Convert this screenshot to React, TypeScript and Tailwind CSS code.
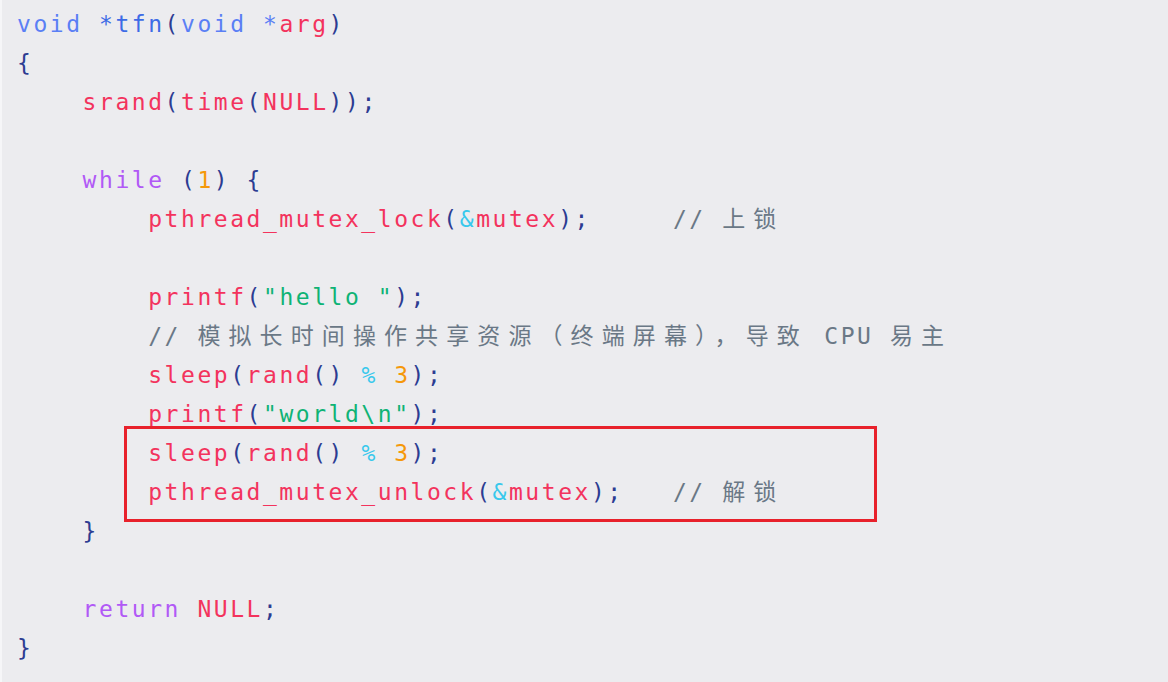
type Tok = [string, string];

const P = "text-[#2c3c92]";
const T = "text-[#5a7ff5]";
const F = "text-[#3d6be6]";
const R = "text-[#f3335d]";
const K = "text-[#b159f6]";
const N = "text-[#f5980a]";
const O = "text-[#38c8ec]";
const S = "text-[#0fb375]";
const C = "text-[#6a7886]";
const CJK = "text-[#6a7886] tracking-[8.1px]";

const lines: Tok[][] = [
  [[T, "void "], [F, "*tfn"], [P, "("], [T, "void *"], [R, "arg"], [P, ")"]],
  [[P, "{"]],
  [[P, "    "], [R, "srand"], [P, "("], [R, "time"], [P, "("], [R, "NULL"], [P, "));"]],
  [],
  [[P, "    "], [K, "while "], [P, "("], [N, "1"], [P, ") {"]],
  [[P, "        "], [R, "pthread_mutex_lock"], [P, "("], [O, "&"], [R, "mutex"], [P, ");     "], [C, "// "], [CJK, "上锁"]],
  [],
  [[P, "        "], [R, "printf"], [P, "("], [S, "\"hello \""], [P, ");"]],
  [[P, "        "], [C, "// "], [CJK, "模拟长时间操作共享资源（终端屏幕），导致"], [C, " CPU "], [CJK, "易主"]],
  [[P, "        "], [R, "sleep"], [P, "("], [R, "rand"], [P, "() "], [O, "% "], [N, "3"], [P, ");"]],
  [[P, "        "], [R, "printf"], [P, "("], [S, "\"world\\n\""], [P, ");"]],
  [[P, "        "], [R, "sleep"], [P, "("], [R, "rand"], [P, "() "], [O, "% "], [N, "3"], [P, ");"]],
  [[P, "        "], [R, "pthread_mutex_unlock"], [P, "("], [O, "&"], [R, "mutex"], [P, ");   "], [C, "// "], [CJK, "解锁"]],
  [[P, "    }"]],
  [],
  [[P, "    "], [K, "return "], [R, "NULL"], [P, ";"]],
  [[P, "}"]],
];

export default function App() {
  return (
    <div className="relative w-[1168px] h-[682px] overflow-hidden bg-[#ececef] border-l-2 border-[#f6f6f8]">
      <pre
        className="pt-[5px] pl-[15px] text-[23px] leading-[39px] tracking-[2.55px] whitespace-pre"
        style={{ fontFamily: '"DejaVu Sans Mono", "Noto Sans CJK SC", monospace' }}
      >
        {lines.map((line, i) => (
          <div key={i} className="h-[39px]">
            {line.map(([cls, text], j) => (
              <span key={j} className={cls}>
                {text}
              </span>
            ))}
          </div>
        ))}
      </pre>
      <div className="absolute left-[122px] top-[426px] w-[753px] h-[96px] border-[3px] border-[#e8212b]" />
    </div>
  );
}
